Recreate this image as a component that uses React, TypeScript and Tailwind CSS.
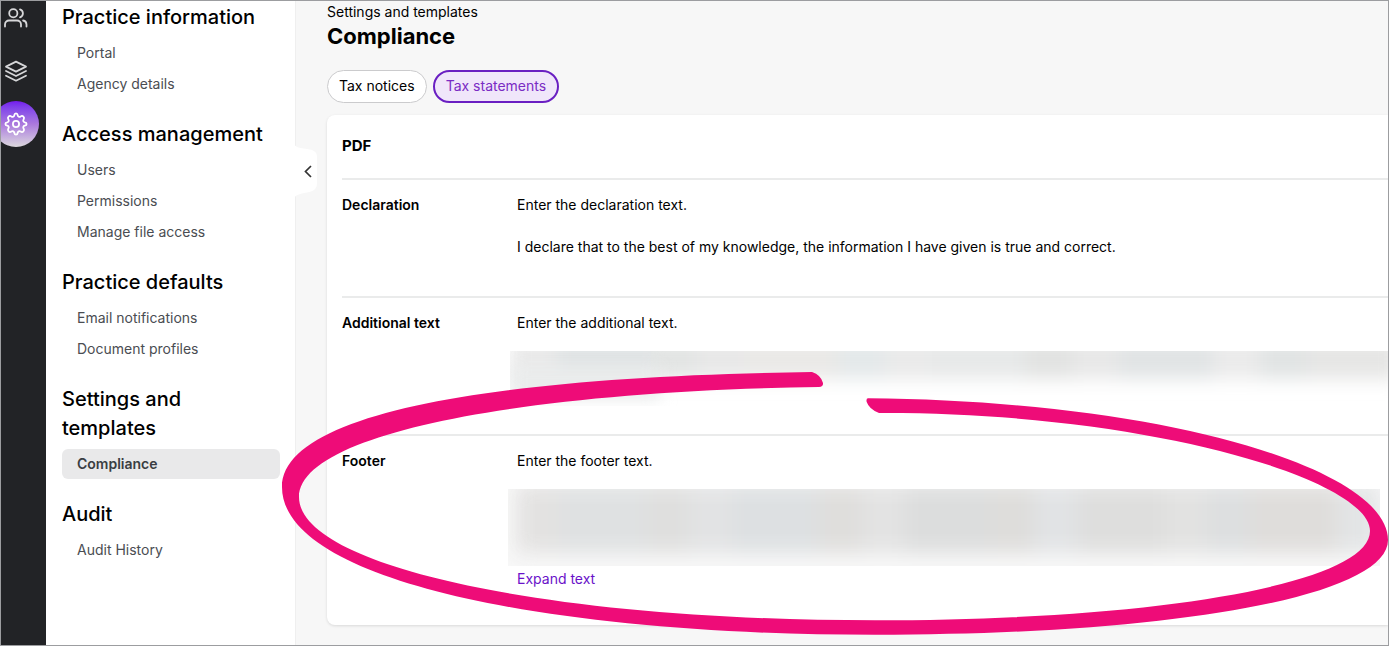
import React from "react";

const navGroups = [
  { title: "Practice information", items: ["Portal", "Agency details"] },
  { title: "Access management", items: ["Users", "Permissions", "Manage file access"] },
  { title: "Practice defaults", items: ["Email notifications", "Document profiles"] },
  { title: "Settings and templates", items: ["Compliance"] },
  { title: "Audit", items: ["Audit History"] },
];

// Outer edge runs anticlockwise from the top tip; the inner edge runs back to it.
const ringPath = [
  "M812 372",
  "C512 376 282 409 282 487",
  "C282 580 545 634.8 875 634.8",
  "C1170 634.8 1388 597 1388 540",
  "C1388 470 1170 401 868 398.3",
  "Q866 398.5 866.6 401.7",
  "Q869 409 879 413",
  "C1150 412 1370 480 1370 531",
  "C1370 584 1155 620.3 875 620.3",
  "C550 620.3 299 567 299 497",
  "C299 432 530 391 819 387",
  "Q823.5 386.5 823 383",
  "Q821 375 812 372Z",
].join("");

function UsersIcon() {
  return (
    <svg viewBox="0 0 24 24" className="size-6" fill="none" stroke="currentColor" strokeWidth="1.8" strokeLinecap="round" strokeLinejoin="round">
      <circle cx="9.3" cy="8.3" r="4.1" />
      <path d="M1 21.500v-2a4 4 0 0 1 4-4h8a4 4 0 0 1 4 4v2M16 4.300a4.200 4.200 0 0 1 0 8M22.500 21.500v-2a4.200 4.200 0 0 0-3.400-4" />
    </svg>
  );
}

function LayersIcon() {
  return (
    <svg viewBox="0 0 24 24" className="size-6" fill="none" stroke="currentColor" strokeWidth="1.8" strokeLinecap="round" strokeLinejoin="round">
      <path d="M12 2.600 22 7.600 12 12.600 2 7.600ZM2 12l10 5 10-5M2 16.700l10 5 10-5" />
    </svg>
  );
}

function GearIcon() {
  return (
    <svg viewBox="0 0 24 24" className="size-6" fill="none" stroke="currentColor" strokeWidth="1.8" strokeLinejoin="round">
      <circle cx="12" cy="12" r="3.1" />
      <path d="M10.3 3.2C10.7 .8 13.3 .8 13.7 3.2C14 4.7 15.3 5.2 16.6 4.4C18.7 3 21 5.3 19.6 7.4C18.8 8.7 19.3 10 20.8 10.3C23.2 10.7 23.2 13.3 20.8 13.7C19.3 14 18.8 15.3 19.6 16.6C21 18.7 18.7 21 16.6 19.6C15.3 18.8 14 19.3 13.7 20.8C13.3 23.2 10.7 23.2 10.3 20.8C10 19.3 8.7 18.8 7.4 19.6C5.3 21 3 18.7 4.4 16.6C5.2 15.3 4.7 14 3.2 13.7C.8 13.3 .8 10.7 3.2 10.3C4.7 10 5.2 8.7 4.4 7.4C3 5.3 5.3 3 7.4 4.4C8.7 5.2 10 4.7 10.3 3.2Z" />
    </svg>
  );
}

function IconRail() {
  return (
    <nav aria-label="Main" className="flex w-[45px] shrink-0 flex-col overflow-hidden bg-[#222326] text-[#d6d6d8]">
      <a href="#clients" aria-label="Clients" className="flex h-8 w-[30px] items-center justify-center">
        <UsersIcon />
      </a>
      <a href="#workpapers" aria-label="Workpapers" className="mt-[22px] flex h-8 w-[30px] items-center justify-center">
        <LayersIcon />
      </a>
      <a
        href="#settings"
        aria-label="Settings"
        className="mt-[14px] -ml-2 flex size-[46px] items-center justify-center rounded-full bg-linear-to-b from-[#7417ee] via-[#ab78dd] to-[#dcd8dc] text-white"
      >
        <GearIcon />
      </a>
    </nav>
  );
}

function Sidebar() {
  return (
    <aside className="relative w-[250px] shrink-0 border-r border-[#efefef] bg-white pr-[15px] pl-4">
      <nav aria-label="Settings" className="flex flex-col gap-5 pt-0.5">
        {navGroups.map((group) => (
          <section key={group.title}>
            <h2 className="max-w-[204px] text-[20px] leading-[29px] font-medium text-black">{group.title}</h2>
            <ul className="mt-[6px] flex flex-col gap-px pb-px">
              {group.items.map((item) => {
                const active = item === "Compliance";
                return (
                  <li key={item}>
                    <a
                      href="#"
                      aria-current={active ? "page" : undefined}
                      className={
                        active
                          ? "block rounded-md bg-[#e9e9ea] px-[15px] text-[14px] leading-[30px] font-semibold text-[#3a3d42]"
                          : "block rounded-md px-[15px] text-[14px] leading-[30px] text-[#4a4d52]"
                      }
                    >
                      {item}
                    </a>
                  </li>
                );
              })}
            </ul>
          </section>
        ))}
      </nav>
      <button type="button" aria-label="Collapse menu" className="absolute top-[142px] -right-[23px] h-14 w-6">
        <svg viewBox="0 0 24 56" className="h-14 w-6" fill="none">
          <path d="M0 0C1 4 4 4.5 10 5.5C19 6.5 23 8 23 14V40C23 46 20 48 13 49.5C5 51 1 52 0 56Z" fill="#fff" />
          <path d="M17 23 11.5 28.5 17 34" stroke="#333" strokeWidth="1.7" />
        </svg>
      </button>
    </aside>
  );
}

const paleTints = ["#eaeaea", "#e0e4e5", "#e3e5e4", "#e8e8e8", "#eae9e7", "#e4e9ea", "#eaeaea", "#e7e9e9", "#e2e3e2", "#e8e8e8", "#e1e4e5", "#ebebeb", "#e1e4e4", "#e6e6e5"];
const greyTints = ["#e3e2e1", "#dfe1e2", "#dfdfde", "#e2e3e4", "#dde0e2", "#dfdedc", "#e3e3e3", "#dcdddd", "#dedddb", "#e1e3e5", "#dededd", "#e2e2e1", "#dddfe0", "#dfdddb", "#e3e5e6"];

function Tints({ colors, className }: { colors: string[]; className: string }) {
  return (
    <div className={className}>
      {colors.map((color, i) => (
        <span key={i} className={i % 3 === 1 ? "h-full flex-2" : "h-full flex-1"} style={{ backgroundColor: color }} />
      ))}
    </div>
  );
}

function Row({ label, hint, className, children }: { label: string; hint: string; className: string; children: React.ReactNode }) {
  return (
    <section className={`flex border-t-2 border-[#eaebeb] pt-[15px] ${className}`}>
      <h3 className="w-[175px] shrink-0 font-semibold">{label}</h3>
      <div className="min-w-0 flex-1">
        <p>{hint}</p>
        {children}
      </div>
    </section>
  );
}

export default function App() {
  return (
    <div className="relative flex min-h-screen overflow-hidden border border-[#9c9da0] bg-[#f7f7f7] font-['Inter','Liberation_Sans',sans-serif] text-black">
      <IconRail />
      <Sidebar />
      <main className="min-w-0 flex-1 pb-[19px] pl-[31px] text-[14px] leading-5">
        <p className="pt-px">Settings and templates</p>
        <h1 className="text-[22px] leading-7 font-bold">Compliance</h1>
        <div className="mt-5 flex gap-1.5">
          <button type="button" className="h-[33px] rounded-full border border-[#cbcbcd] bg-white px-[11px] pb-px">
            Tax notices
          </button>
          <button type="button" aria-pressed="true" className="h-[33px] rounded-full border-2 border-[#6a1fc2] bg-[#f0e6fa] px-[11px] pb-px text-[#7a2bc4]">
            Tax statements
          </button>
        </div>
        <div className="mt-3 rounded-l-lg bg-white pl-[15px] shadow-[0_1px_3px_rgba(0,0,0,0.12)]">
          <h2 className="pt-[21px] pb-[22px] text-[15px] leading-5 font-bold">PDF</h2>
          <Row label="Declaration" hint="Enter the declaration text." className="pb-[39px]">
            <p className="mt-[22px]">
              I declare that to the best of my knowledge, the information I have given is true and correct.
            </p>
          </Row>
          <Row label="Additional text" hint="Enter the additional text." className="pb-7">
            <div aria-hidden="true" className="mt-[18px] -ml-[7px] h-[55px] overflow-hidden">
              <Tints colors={paleTints} className="-mt-3 -mr-3 flex h-10 blur-[9px]" />
              <div className="-mt-3 h-8 w-[150px] bg-[#e9ebeb] blur-[8px]" />
            </div>
          </Row>
          <Row label="Footer" hint="Enter the footer text." className="pb-9">
            <div aria-hidden="true" className="mt-[18px] mr-2 -ml-[9px] h-[77px] overflow-hidden bg-[#f8f8f8]">
              <Tints colors={greyTints} className="-mt-1 ml-2 flex h-[68px] blur-[10px]" />
            </div>
            <button type="button" className="mt-[3px] block text-[#6a12c9]">
              Expand text
            </button>
          </Row>
        </div>
      </main>
      <svg
        aria-hidden="true"
        viewBox="0 0 1389 646"
        preserveAspectRatio="none"
        className="pointer-events-none absolute -inset-px h-[calc(100%+2px)] w-[calc(100%+2px)]"
      >
        <path d={ringPath} fill="#ee0c78" />
      </svg>
    </div>
  );
}
